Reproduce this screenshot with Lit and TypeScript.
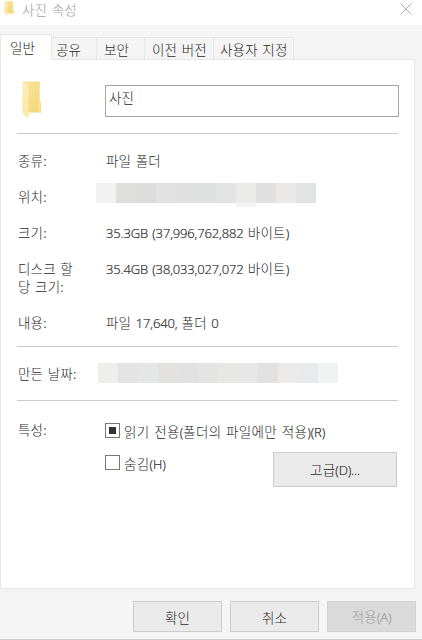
import { LitElement, html, css, svg } from "lit";
import { customElement, property } from "lit/decorators.js";

const LOCATION_CELLS = ["#f2f2f2", "#dfdfde", "#dcdcdc", "#e2e2e3", "#e0e0e1", "#dfe1e0", "#e3e3e3", "#ebebe9", "#e0e0e0", "#eae9e7", "#e2e3e5"];
const CREATED_CELLS = ["#eeeeec", "#e4e4e4", "#e5e7e6", "#e4e2e0", "#e1e1e1", "#e4e4e4", "#e7e7e4", "#e7e7e7", "#e1e1e1", "#edebe9", "#e9eaec", "#f1f3f2"];

@customElement("folder-icon")
class FolderIcon extends LitElement {
  static styles = css`
    :host { display: block; }
    svg { display: block; width: 100%; height: 100%; }
  `;
  render() {
    return html`<svg viewBox="0 0 20 38" preserveAspectRatio="none">
      ${svg`<defs>
        <linearGradient id="back" x1="0" y1="0" x2="1" y2="1">
          <stop offset="0" stop-color="#fbe6a0"/><stop offset="1" stop-color="#f2d476"/>
        </linearGradient>
        <linearGradient id="front" x1="0" y1="0" x2="0" y2="1">
          <stop offset="0" stop-color="#fdecb4"/><stop offset="1" stop-color="#fdeaa8"/>
        </linearGradient>
      </defs>
      <path d="M0.3 0.5H17.7V20.5L19 21.5V31.5H6V5Z" fill="url(#back)"/>
      <path d="M15.8 20.5H18L19 21.5V31.5H15.8Z" fill="#f7df8d"/>
      <path d="M0.3 0.5L5.5 5.3Q6.5 6.2 6.5 8V35.5Q6.5 37.8 4.8 36.4L1 32.2Q0.3 31.4 0.3 30.5Z" fill="url(#front)"/>`}
    </svg>`;
  }
}

@customElement("masked-value")
class MaskedValue extends LitElement {
  @property({ attribute: false }) cells: string[] = [];
  @property({ type: Number }) tall = -1;
  static styles = css`
    :host { display: flex; height: 20px; align-items: flex-start; }
    .cell { width: 20px; height: 20px; }
    .tall { border-bottom: 4px solid #f4f4f4; }
  `;
  render() {
    return this.cells.map((c, i) => html`<div class="cell ${i === this.tall ? "tall" : ""}" style="background:${c}"></div>`);
  }
}

@customElement("app-root")
class AppRoot extends LitElement {
  static styles = css`
    :host {
      display: flex; flex-direction: column; box-sizing: border-box;
      width: 422px; height: 640px; overflow: hidden;
      background: #f5f5f5; border-bottom: 1px solid #cfcfcf;
      font: 13px/18px "Open Sans", "Noto Sans CJK KR", sans-serif;
      color: #282828; white-space: nowrap;
    }
    * { box-sizing: border-box; }
    .ko { font-family: "Noto Sans CJK KR", sans-serif; font-size: 13.5px; font-weight: 300; letter-spacing: 0.2px; word-spacing: 1.3px; line-height: 16px; }
    .la { font-size: 13px; font-weight: 300; letter-spacing: -0.15px; word-spacing: 1px; line-height: 16px; -webkit-text-stroke: 0.2px currentColor; }
    .titlebar { display: flex; height: 25px; flex: none; background: #fff; color: #a0a0a0; padding-left: 4px; }
    .titlebar folder-icon { width: 10px; height: 15px; margin-top: 1px; }
    .titlebar .ko { margin: 1px 0 0 8px; flex: 1; }
    .close { width: 12px; height: 12px; margin: 3px 10px 0 0; }
    .tabs { display: flex; align-items: flex-end; height: 35px; margin-bottom: -1px; position: relative; flex: none; }
    .tab { height: 23px; border: 1px solid #e6e6e6; border-left: 0; padding: 3px 0 0 4px; }
    .tab.active { height: 26px; width: 52px; background: #fff; border-left: 1px solid #e6e6e6; border-bottom-color: #fff; padding: 4px 0 0 9px; }
    .t2 { width: 45px; } .t3 { width: 48px; padding-left: 7px; } .t4 { width: 69px; padding-left: 7px; } .t5 { width: 80px; padding-left: 6px; }
    .panel { width: 415px; height: 530px; flex: none; background: #fff; border: 1px solid #e6e6e6; padding: 25px 15px 0 16px; }
    .head { display: flex; height: 48px; }
    .head folder-icon { width: 20px; height: 38px; margin: -4px 0 0 5px; flex: none; }
    .name { width: 294px; height: 32px; margin-left: 63px; border: 1px solid #a5a5a5; padding: 3px 0 0 3px; flex: none; }
    .rule { height: 1px; background: #cbcbcb; width: 381px; }
    .row { display: flex; height: 36px; }
    .row.two { height: 54px; }
    .label { width: 88px; padding-left: 1px; flex: none; }
    .value { padding-left: 1px; }
    .facts { padding-top: 18px; height: 212px; }
    .row masked-value { margin: -5px 0 0 -10px; }
    .created { height: 53px; padding-top: 18px; }
    .row.created masked-value { margin: -2px 0 0 -7px; }
    .attrs { padding-top: 20px; height: 140px; display: flex; }
    .options { width: 292px; margin-top: 2px; }
    .check { display: flex; height: 31px; }
    .check .ko { letter-spacing: 0.35px; }
    .box { width: 15px; height: 15px; border: 1px solid #777; margin: 0 4px 0 0; flex: none; padding: 3px; }
    .fill { width: 7px; height: 7px; background: #333; }
    .second { display: flex; justify-content: space-between; align-items: flex-start; }
    .second .check { padding-top: 1px; }
    .button { border: 1px solid #cbcbcb; background: #eaeaea; display: flex; align-items: center; justify-content: center; }
    .advanced { width: 124px; height: 35px; margin-top: -2px; }
    .footer { display: flex; gap: 8px; justify-content: flex-end; padding: 12px 6px 0 0; }
    .footer .button { width: 89px; height: 31px; }
    .footer .disabled { background: #dadada; color: #9b9b9b; border-color: #d2d2d2; }
  `;
  ko(t: unknown) { return html`<span class="ko">${t}</span>`; }
  la(t: unknown) { return html`<span class="la">${t}</span>`; }
  row(label: unknown, value: unknown, cls = "") {
    return html`<div class="row ${cls}"><div class="label">${this.ko(label)}</div><div class="value">${value}</div></div>`;
  }
  render() {
    const { ko, la } = this;
    return html`
      <div class="titlebar"><folder-icon></folder-icon>${ko("사진 속성")}
        <svg class="close" viewBox="0 0 12 12"><path d="M.7.7 11.3 11.3M11.3.7.7 11.3" stroke="#b0b0b0" fill="none"/></svg>
      </div>
      <div class="tabs">
        <div class="tab active">${ko("일반")}</div><div class="tab t2">${ko("공유")}</div>
        <div class="tab t3">${ko("보안")}</div><div class="tab t4">${ko("이전 버전")}</div>
        <div class="tab t5">${ko("사용자 지정")}</div>
      </div>
      <div class="panel">
        <div class="head"><folder-icon></folder-icon><div class="name">${ko("사진")}</div></div>
        <div class="rule"></div>
        <div class="facts">
          ${this.row("종류:", ko("파일 폴더"))}
          ${this.row("위치:", html`<masked-value .cells=${LOCATION_CELLS} .tall=${7}></masked-value>`)}
          ${this.row("크기:", html`${la("35.3GB (37,996,762,882 ")}${ko("바이트")}${la(")")}`)}
          ${this.row(html`디스크 할<br>당 크기:`, html`${la("35.4GB (38,033,027,072 ")}${ko("바이트")}${la(")")}`, "two")}
          ${this.row("내용:", html`${ko("파일 ")}${la("17,640, ")}${ko("폴더 ")}${la("0")}`)}
        </div>
        <div class="rule"></div>
        <div class="row created"><div class="label">${ko("만든 날짜:")}</div><masked-value .cells=${CREATED_CELLS}></masked-value></div>
        <div class="rule"></div>
        <div class="attrs">
          <div class="label">${ko("특성:")}</div>
          <div class="options">
            <div class="check"><div class="box"><div class="fill"></div></div><div>${ko("읽기 전용")}${la("(")}${ko("폴더의 파일에만 적용")}${la(")(R)")}</div></div>
            <div class="second">
              <div class="check"><div class="box"></div><div>${ko("숨김")}${la("(H)")}</div></div>
              <div class="button advanced"><div>${ko("고급")}${la("(D)...")}</div></div>
            </div>
          </div>
        </div>
      </div>
      <div class="footer">
        <div class="button">${ko("확인")}</div><div class="button">${ko("취소")}</div>
        <div class="button disabled"><div>${ko("적용")}${la("(A)")}</div></div>
      </div>`;
  }
}
